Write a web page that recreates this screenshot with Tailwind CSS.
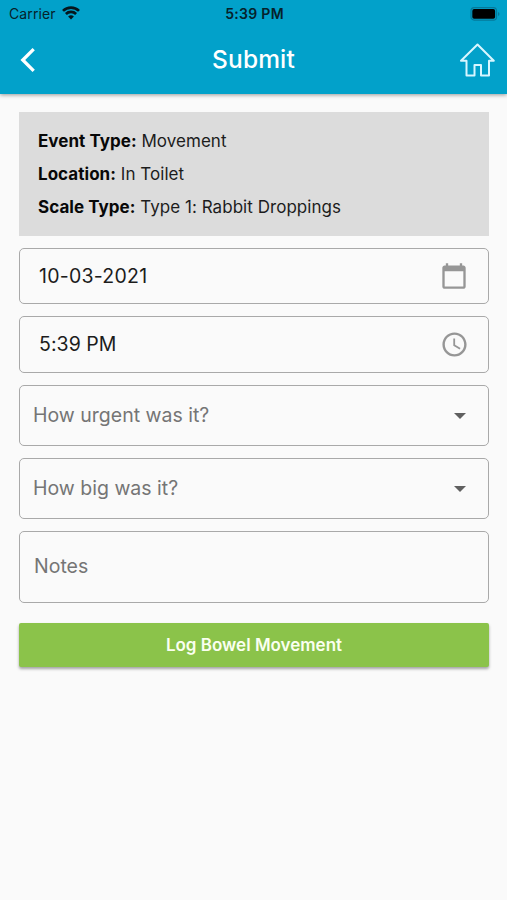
<!DOCTYPE html>
<html lang="en">
<head>
<meta charset="utf-8">
<meta name="viewport" content="width=device-width, initial-scale=1">
<title>Submit</title>
<script src="https://cdn.jsdelivr.net/npm/@tailwindcss/browser@4"></script>
</head>
<body class="min-h-screen bg-[#fafafa] font-['Inter',sans-serif] text-[#1c1c1c] whitespace-nowrap overflow-hidden">
<header class="h-[94px] bg-[#02a1ca] shadow-[0_1px_4px_rgba(0,0,0,0.4)]">
  <div class="grid grid-cols-3 h-7 items-center pl-[9px] pr-[7px] text-[14px] text-[#06222b]">
    <div class="flex items-center gap-[6px]">
      <span class="pb-0.5 tracking-[0.1px]">Carrier</span>
      <svg class="w-[18px] h-[14px] -mt-0.5" viewBox="0 0 18 14" fill="none" stroke="#06161c" stroke-width="2.7"><path d="M1 4.9a11.4 11.4 0 0 1 16 0M3.9 8a7.3 7.3 0 0 1 10.2 0"/><path d="M9 13.6 6.1 10.6a4.1 4.1 0 0 1 5.8 0Z" fill="#06161c" stroke="none"/></svg>
    </div>
    <span class="pb-0.5 text-center text-[14px] font-semibold tracking-[0.3px]">5:39 PM</span>
    <svg class="justify-self-end w-[30px] h-[14px] -mt-px" viewBox="0 0 30 14"><rect x="1" y=".7" width="25.5" height="12.4" rx="3.2" fill="none" stroke="#05799a" stroke-width="1.2"/><rect x="2.3" y="2.1" width="22.8" height="9.600" rx="1.8"/><path d="M28 5v4q1.5-.7 1.5-2T28 5Z" fill="#05799a"/></svg>
  </div>
  <div class="grid grid-cols-3 h-[64px] items-center px-3">
    <svg class="ml-2 w-4 h-6" viewBox="0 0 16 24" fill="none" stroke="#fff" stroke-width="3.300"><path d="M13.700 1.200 2.800 12l10.900 10.800"/></svg>
    <h1 class="pb-px text-center text-[24.5px] font-medium tracking-[0.15px] text-white">Submit</h1>
    <svg class="justify-self-end w-[36px] h-[34px]" viewBox="0 0 36 34" fill="none" stroke="#d8f6ff" stroke-width="2" stroke-linejoin="round"><path d="M18.500 1.500 2 17.800h5.500v14.700h8V22h6.500v10.500h8V17.800h4.800Z"/></svg>
  </div>
</header>
<main class="flex flex-col pt-[18px] pl-[19px] pr-[18px]">
  <section class="h-[124px] bg-[#dcdcdc] pt-[13px] pl-[19px] text-[17px] leading-[33px] tracking-[0.04px]">
    <p><b class="font-bold text-[#080808]">Event Type:</b> Movement</p>
    <p><b class="font-bold text-[#080808]">Location:</b> In Toilet</p>
    <p><b class="font-bold text-[#080808]">Scale Type:</b> Type 1: Rabbit Droppings</p>
  </section>
  <div class="mt-[12px] h-[56px] flex items-center justify-between rounded-[5px] border border-[#a9a9a9] pl-[19px] pr-[20px] text-[19.5px]">
    <span class="pt-0.5 tracking-[0.25px]">10-03-2021</span>
    <svg class="w-[28px] h-[28px]" viewBox="0 0 24 24" fill="#969696"><path d="M20 3h-1V1h-2v2H7V1H5v2H4c-1.100 0-2 .9-2 2v16c0 1.100.9 2 2 2h16c1.100 0 2-.9 2-2V5c0-1.100-.9-2-2-2zm0 18H4V8h16v13z"/></svg>
  </div>
  <div class="mt-[12px] h-[57px] flex items-center justify-between rounded-[5px] border border-[#a9a9a9] pl-[19px] pr-[19px] text-[19.5px]">
    <span class="tracking-[0.05px]">5:39 PM</span>
    <svg class="w-[29px] h-[29px]" viewBox="0 0 24 24" fill="#969696"><path d="M11.990 2C6.470 2 2 6.480 2 12s4.470 10 9.990 10C17.520 22 22 17.520 22 12S17.520 2 11.990 2zM12 20c-4.420 0-8-3.580-8-8s3.580-8 8-8 8 3.580 8 8-3.580 8-8 8zm.5-13H11v6l5.250 3.150.75-1.230-4.500-2.670z"/></svg>
  </div>
  <div class="mt-[12px] h-[61px] flex items-center justify-between rounded-[5px] border border-[#a9a9a9] pl-[13px] pr-[22px] text-[19.5px] text-[#757575]">
    <span>How urgent was it?</span>
    <svg class="w-[12px] h-[6px]" viewBox="0 0 12 6" fill="#606060"><path d="M0 0h12L6 6z"/></svg>
  </div>
  <div class="mt-[12px] h-[61px] flex items-center justify-between rounded-[5px] border border-[#a9a9a9] pl-[13px] pr-[22px] text-[19.5px] text-[#757575]">
    <span>How big was it?</span>
    <svg class="w-[12px] h-[6px]" viewBox="0 0 12 6" fill="#606060"><path d="M0 0h12L6 6z"/></svg>
  </div>
  <div class="mt-[12px] h-[72px] flex items-center rounded-[5px] border border-[#a9a9a9] pl-[14px] text-[19.5px] text-[#757575]"><span>Notes</span></div>
  <button class="mt-5 h-[44px] rounded-[2px] bg-[#8bc34a] pt-px text-[17px] font-semibold text-[#fafff0] shadow-[0_2px_3px_rgba(0,0,0,0.35)]">Log Bowel Movement</button>
</main>
</body>
</html>
